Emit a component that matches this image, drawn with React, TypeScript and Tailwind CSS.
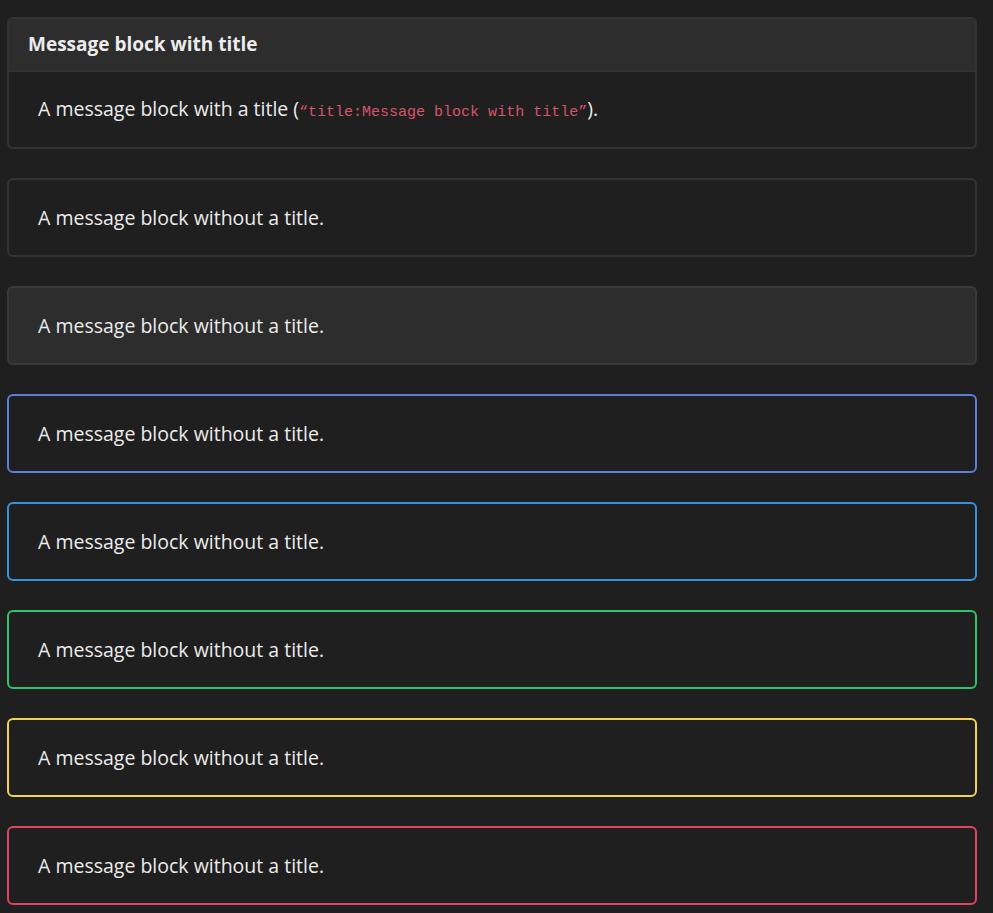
const blocks = [
  { border: "border-[#333333]", bg: "bg-[#1f1f1f]" },
  { border: "border-[#3a3a3a]", bg: "bg-[#2d2d2d]" },
  { border: "border-[#5b7fd6]", bg: "bg-[#1f1f1f]" },
  { border: "border-[#3592de]", bg: "bg-[#1f1f1f]" },
  { border: "border-[#2ec46a]", bg: "bg-[#1f1f1f]" },
  { border: "border-[#f2d24f]", bg: "bg-[#1f1f1f]" },
  { border: "border-[#e0445e]", bg: "bg-[#1f1f1f]" },
];

export default function App() {
  return (
    <div
      className="min-h-[913px] bg-[#1f1f1f] pt-[17px] pl-[7px] pr-[16px] text-[#ececec]"
      style={{ fontFamily: "'Open Sans', 'Noto Sans', sans-serif" }}
    >
      <div className="flex flex-col gap-[29px]">
        <div className="overflow-hidden rounded-md border-2 border-[#333333] bg-[#1f1f1f]">
          <div className="flex h-[53px] items-center border-b-2 border-[#333333] bg-[#2d2d2d] px-[19px] text-[19px] font-bold">
            Message block with title
          </div>
          <div className="flex h-[75px] items-center px-[29px] text-[19.5px]">
            <span>
              A message block with a title (
              <code className="font-['Liberation_Mono',monospace] text-[15px] text-[#d9546b]">
                “title:Message block with title”
              </code>
              ).
            </span>
          </div>
        </div>
        {blocks.map((b, i) => (
          <div
            key={i}
            className={`flex h-[79px] items-center rounded-md border-2 px-[29px] text-[19.5px] ${b.border} ${b.bg}`}
          >
            A message block without a title.
          </div>
        ))}
      </div>
    </div>
  );
}
